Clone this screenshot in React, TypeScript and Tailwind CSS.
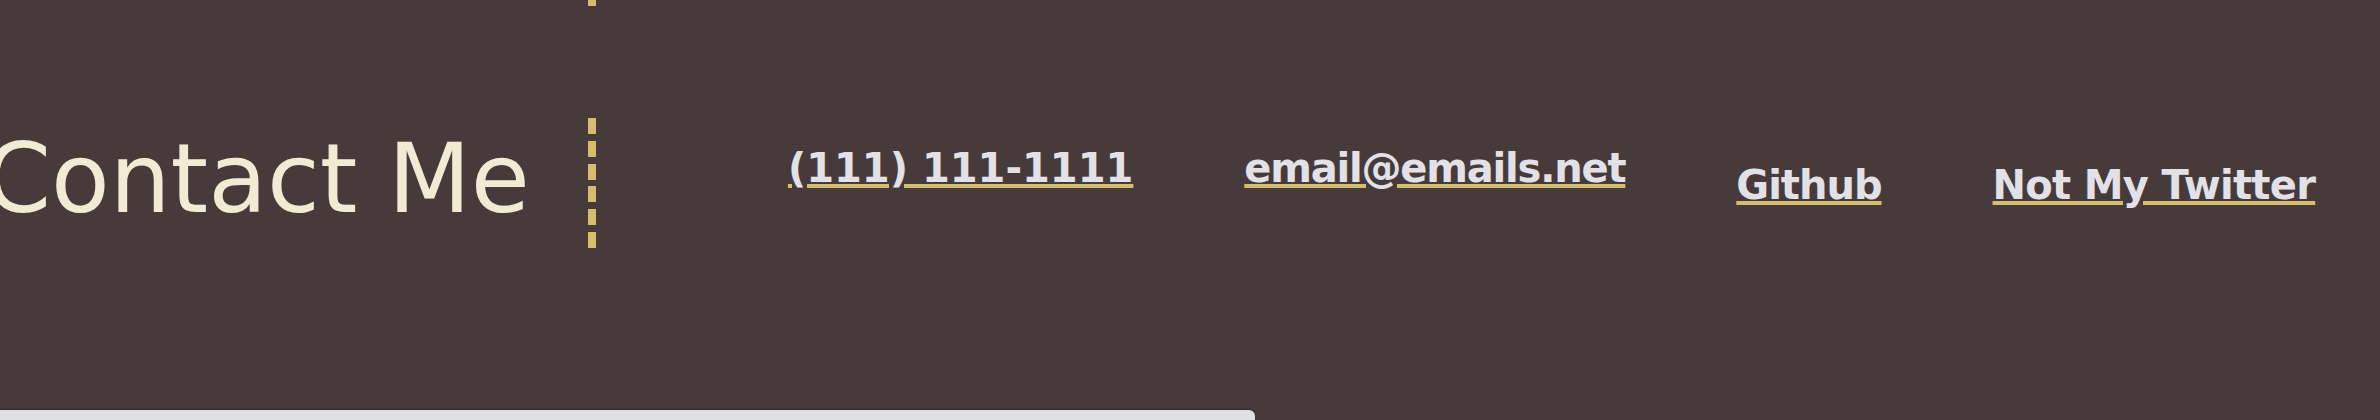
const links = [
  { label: "(111) 111-1111", href: "tel:1111111111", className: "mt-[30px]" },
  { label: "email@emails.net", href: "mailto:email@emails.net", className: "mt-[30px] tracking-[-1.2px]" },
  { label: "Github", href: "#", className: "mt-[47px] tracking-[-1px]" },
  { label: "Not My Twitter", href: "#", className: "mt-[47px] tracking-[-0.7px]" },
];

export default function App() {
  return (
    <div className="flex h-[420px] w-full flex-col overflow-hidden bg-[#463b3a] font-['DejaVu_Sans',sans-serif]">
      {/* tail of the divider from the section above */}
      <div className="ml-[588px] h-[6px] w-[8px] bg-[#d4bd6c]" />

      <section className="flex items-start pt-[112px]">
        <h2 className="-ml-4 mt-[13px] shrink-0 whitespace-nowrap text-[96px] leading-none font-normal text-[#f2ebd3]">
          Contact Me
        </h2>

        {/* dashed divider */}
        <div className="ml-[58px] h-[130px] w-[8px] shrink-0 bg-[repeating-linear-gradient(to_bottom,#d4bd6c_0_16px,transparent_16px_22.8px)]" />

        <ul className="ml-[192px] flex items-start gap-[111px]">
          {links.map((link) => (
            <li key={link.label} className={link.className}>
              <a
                href={link.href}
                className="whitespace-nowrap text-[40px] leading-none font-bold text-[#e2e1e8] underline decoration-[#d4bd6c] decoration-[4px] underline-offset-[2px]"
              >
                {link.label}
              </a>
            </li>
          ))}
        </ul>
      </section>

      <div className="mt-auto h-[10px] w-[1255px] rounded-tr-md bg-[#dfe0e4] shadow-[0_-1px_2px_rgba(0,0,0,0.35)]" />
    </div>
  );
}
